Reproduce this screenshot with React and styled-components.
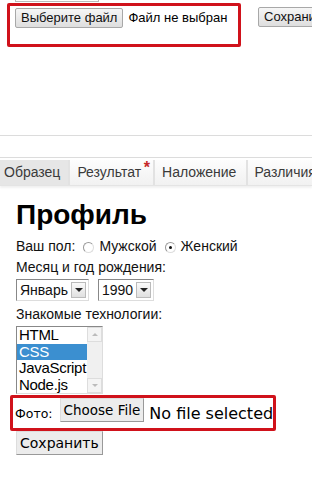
import React from 'react'
import styled, { createGlobalStyle } from 'styled-components'

const Global = createGlobalStyle`
  html, body { margin: 0; padding: 0; background: #fff; }
  body { width: 312px; height: 491px; overflow: hidden; font-family: "Liberation Sans", Arial, sans-serif; }
`

const Page = styled.div`
  display: flex;
  flex-direction: column;
  width: 312px;
  overflow: hidden;
`

const TopStrip = styled.div`
  height: 2px;
  display: flex;
`

const StubEdge = styled.div`
  margin-left: 15px;
  width: 82px;
  border-bottom: 1px solid #bbb;
  border-left: 1px solid #bbb;
  border-right: 1px solid #bbb;
`

const TopRow = styled.div`
  display: flex;
  align-items: flex-start;
  padding-left: 7px;
  margin-top: 1px;
`

const Highlight = styled.div`
  flex-shrink: 0;
  border: 3px solid #d0121b;
  border-radius: 2px;
  box-sizing: border-box;
  width: ${p => p.w}px;
  height: ${p => p.h}px;
  display: flex;
  align-items: ${p => p.center ? 'center' : 'flex-start'};
  padding: ${p => p.pad || '1px 0 0 5px'};
  gap: ${p => p.gap || 6}px;
`

const WinButton = styled.div`
  flex-shrink: 0;
  height: 20px;
  box-sizing: border-box;
  padding: 0 5px;
  border: 1px solid #a8a8a8;
  border-radius: 2px;
  background: linear-gradient(#f6f6f6, #dedede);
  font-size: 13px;
  line-height: 18px;
  color: #111;
  white-space: nowrap;
`

const FileLabel = styled.span`
  font-size: 13px;
  line-height: 20px;
  color: #000;
  white-space: nowrap;
`

const SaveTop = styled(WinButton)`
  margin-left: 17px;
  margin-top: 4px;
`

const Rule = styled.div`
  height: 1px;
  background: #dcdcdc;
  margin-top: ${p => p.mt}px;
`

const Tabs = styled.div`
  display: flex;
  height: 25px;
  border-bottom: 1px solid #e4e4e4;
  box-shadow: 0 2px 2px rgba(0,0,0,0.06);
  margin-top: 2px;
`

const Tab = styled.div`
  position: relative;
  flex-shrink: 0;
  padding: 0 ${p => p.pr}px 0 ${p => p.pl}px;
  font-size: 14px;
  line-height: 25px;
  color: #3a3a3a;
  white-space: nowrap;
  background: ${p => p.active ? '#e6e6e6' : 'linear-gradient(#fdfdfd, #f1f1f1)'};
  border-right: 2px solid #e2e2e2;
`

const Star = styled.span`
  position: absolute;
  right: 3px;
  top: -5px;
  color: #c62828;
  font-size: 16px;
  font-weight: bold;
`

const Form = styled.div`
  display: flex;
  flex-direction: column;
  padding-left: 16px;
  font-size: 14px;
  color: #111;
`

const Title = styled.h1`
  margin: 13px 0 0;
  font-size: 28px;
  line-height: 32px;
  font-weight: bold;
  color: #000;
`

const Line = styled.div`
  display: flex;
  align-items: center;
  height: ${p => p.h || 21}px;
  margin-top: ${p => p.mt || 0}px;
  white-space: nowrap;
`

const Radio = styled.span`
  display: inline-block;
  width: 9px;
  height: 9px;
  margin: 4px 5px 0 8px;
  border-radius: 50%;
  border: 1px solid #aaa;
  border-color: #999 #ddd #ddd #999;
  position: relative;
  &::after {
    content: '';
    display: ${p => p.checked ? 'block' : 'none'};
    position: absolute;
    left: 3px; top: 3px;
    width: 3px; height: 3px;
    border-radius: 50%;
    background: #111;
  }
`

const Select = styled.div`
  display: flex;
  align-items: center;
  height: 22px;
  box-sizing: border-box;
  border: 1px solid #7a7a7a;
  border-color: #888 #ddd #ddd #888;
  padding-left: 3px;
  margin-right: 9px;
  font-size: 14px;
  gap: 3px;
`

const Arrow = styled.span`
  width: 15px;
  height: 16px;
  margin-right: 2px;
  background: linear-gradient(#fafafa, #e0e0e0);
  border: 1px solid #bbb;
  box-sizing: border-box;
  display: flex;
  align-items: center;
  justify-content: center;
  &::after {
    content: '';
    border-left: 4px solid transparent;
    border-right: 4px solid transparent;
    border-top: 4px solid #222;
  }
`

const ListBox = styled.div`
  margin-top: 2px;
  width: 87px;
  height: 68px;
  box-sizing: border-box;
  border: 1px solid #888;
  border-color: #888 #ddd #ddd #888;
  display: flex;
`

const Options = styled.div`
  flex: 1;
  display: flex;
  flex-direction: column;
  overflow: hidden;
`

const Option = styled.div`
  height: 16.5px;
  line-height: 16px;
  font-size: 15px;
  letter-spacing: -0.3px;
  padding-left: 2px;
  white-space: nowrap;
  color: ${p => p.selected ? '#fff' : '#000'};
  background: ${p => p.selected ? '#3b8fd0' : 'transparent'};
`

const Scroll = styled.div`
  width: 15px;
  background: #f0f0f0;
  display: flex;
  flex-direction: column;
  justify-content: space-between;
`

const ScrollBtn = styled.div`
  height: 15px;
  background: #f4f4f4;
  border: 1px solid #ddd;
  box-sizing: border-box;
  display: flex;
  align-items: center;
  justify-content: center;
  &::after {
    content: '';
    border-left: 3px solid transparent;
    border-right: 3px solid transparent;
    ${p => p.up ? 'border-bottom: 3px solid #bbb;' : 'border-top: 3px solid #bbb;'}
  }
`

const PhotoRow = styled(Highlight)`
  margin-left: -6px;
  margin-top: 1px;
  font-family: "DejaVu Sans", sans-serif;
  font-size: 12.5px;
  color: #000;
  white-space: nowrap;
`

const NoFile = styled.span`
  font-size: 16px;
  margin-left: -2px;
`

const GtkButton = styled.div`
  height: 24px;
  box-sizing: border-box;
  padding: 0 3px;
  border: 1px solid #aaa;
  border-color: #ddd #999 #999 #ddd;
  background: #ececec;
  font-family: "DejaVu Sans", sans-serif;
  font-size: ${p => p.fs || 14}px;
  line-height: 22px;
  color: #000;
  white-space: nowrap;
  align-self: flex-start;
`

const Submit = styled(GtkButton)`
  margin-top: 0;
`

export default function App() {
  return (
    <Page>
      <Global />
      <TopStrip><StubEdge /></TopStrip>
      <TopRow>
        <Highlight w={234} h={44} pad="2px 0 0 5px" gap={5}>
          <WinButton>Выберите файл</WinButton>
          <FileLabel>Файл не выбран</FileLabel>
        </Highlight>
        <SaveTop>Сохранить</SaveTop>
      </TopRow>
      <Rule mt={88} />
      <Rule mt={21} />
      <Tabs>
        <Tab active pl={4} pr={8}>Образец</Tab>
        <Tab pl={7} pr={12}>Результат<Star>*</Star></Tab>
        <Tab pl={7} pr={10}>Наложение</Tab>
        <Tab pl={6} pr={6}>Различия</Tab>
      </Tabs>
      <Form>
        <Title>Профиль</Title>
        <Line mt={4}>
          Ваш пол:<Radio />Мужской<Radio checked />Женский
        </Line>
        <Line>Месяц и год рождения:</Line>
        <Line h={26}>
          <Select>Январь<Arrow /></Select>
          <Select>1990<Arrow /></Select>
        </Line>
        <Line>Знакомые технологии:</Line>
        <ListBox>
          <Options>
            <Option>HTML</Option>
            <Option selected>CSS</Option>
            <Option>JavaScript</Option>
            <Option>Node.js</Option>
          </Options>
          <Scroll>
            <ScrollBtn up />
            <ScrollBtn />
          </Scroll>
        </ListBox>
        <PhotoRow w={266} h={36} center pad="0 0 0 2px" gap={7}>
          Фото:
          <GtkButton fs={13.5}>Choose File</GtkButton>
          <NoFile>No file selected</NoFile>
        </PhotoRow>
        <Submit>Сохранить</Submit>
      </Form>
    </Page>
  )
}
